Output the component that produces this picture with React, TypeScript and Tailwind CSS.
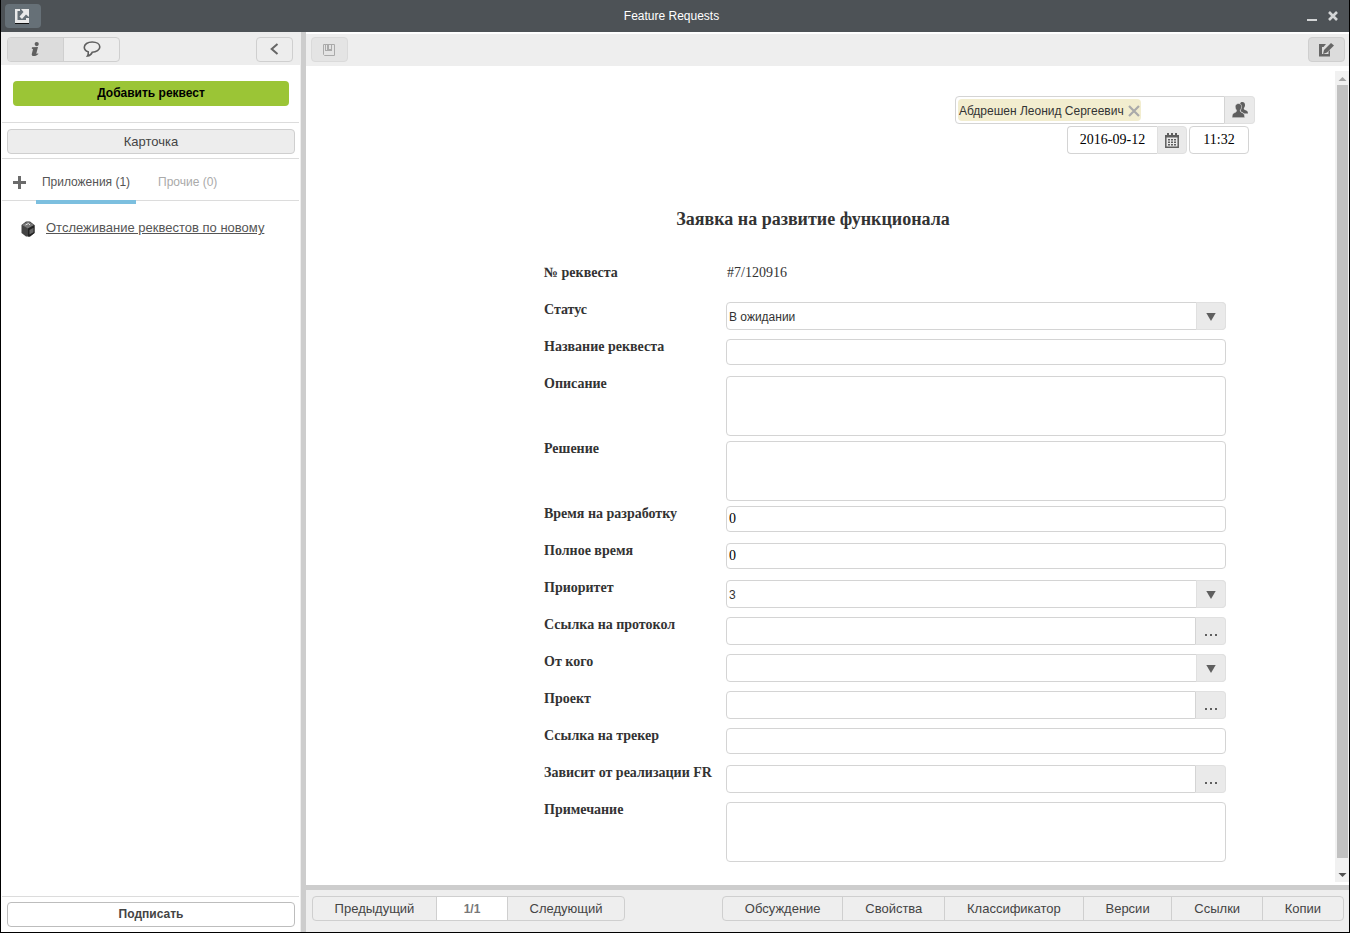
import type { ReactNode } from "react";

const inputClass =
  "rounded border border-[#d4d4d4] bg-white px-0.5 font-['Liberation_Serif',serif] text-[14px] text-black outline-none";
const addonClass =
  "flex w-[30px] shrink-0 items-center justify-center rounded-r border border-[#e0e0e0] bg-[#eaeaea] text-[#5f5f5f]";

type Field = {
  id: string;
  label: string;
  type: "text" | "area" | "select" | "link";
  value?: string;
};

const fields: Field[] = [
  { id: "status", label: "Статус", type: "select", value: "В ожидании" },
  { id: "name", label: "Название реквеста", type: "text" },
  { id: "description", label: "Описание", type: "area" },
  { id: "solution", label: "Решение", type: "area" },
  { id: "devtime", label: "Время на разработку", type: "text", value: "0" },
  { id: "fulltime", label: "Полное время", type: "text", value: "0" },
  { id: "priority", label: "Приоритет", type: "select", value: "3" },
  { id: "protocol", label: "Ссылка на протокол", type: "link" },
  { id: "from", label: "От кого", type: "select", value: "" },
  { id: "project", label: "Проект", type: "link" },
  { id: "tracker", label: "Ссылка на трекер", type: "text" },
  { id: "depends", label: "Зависит от реализации FR", type: "link" },
  { id: "note", label: "Примечание", type: "area" },
];

const footerLinks = ["Обсуждение", "Свойства", "Классификатор", "Версии", "Ссылки", "Копии"];

function FieldControl({ field }: { field: Field }) {
  if (field.type === "area") {
    return <textarea id={field.id} className={`${inputClass} block h-[60px] w-full resize-none`} />;
  }
  if (field.type === "select") {
    return (
      <div className="relative">
        <select
          id={field.id}
          defaultValue={field.value}
          className="block h-7 w-full appearance-none rounded border border-[#d4d4d4] bg-white pt-0.5 pr-8 pl-0.5 text-[12px] text-[#333] outline-none"
        >
          <option value={field.value}>{field.value}</option>
        </select>
        <span className={`${addonClass} pointer-events-none absolute inset-y-0 right-0 pt-0.5`}>
          <svg width="10" height="8" viewBox="0 0 10 8" fill="currentColor">
            <path d="M.3 0h9.400L5 8z" />
          </svg>
        </span>
      </div>
    );
  }
  if (field.type === "link") {
    return (
      <div className="flex h-7">
        <input id={field.id} type="text" className={`${inputClass} min-w-0 flex-1 rounded-r-none`} />
        <button type="button" aria-label={`Выбрать: ${field.label}`} className={`${addonClass} border-l-0`}>
          <svg width="12" height="10" viewBox="0 0 12 10" fill="currentColor">
            <path d="M0 8h2v2H0zM5 8h2v2H5zM10 8h2v2h-2z" />
          </svg>
        </button>
      </div>
    );
  }
  return (
    <input
      id={field.id}
      type="text"
      defaultValue={field.value}
      className={`${inputClass} block h-[26px] w-full`}
    />
  );
}

function Row({ label, htmlFor, children }: { label: string; htmlFor?: string; children: ReactNode }) {
  return (
    <div className="flex min-h-[37px] pb-[5px]">
      <label htmlFor={htmlFor} className="w-[182px] shrink-0 text-[14px] leading-4 font-bold">
        {label}
      </label>
      <div className="min-w-0 flex-1">{children}</div>
    </div>
  );
}

function Header() {
  return (
    <header className="flex h-8 items-center bg-[#4d5256] pr-[11px] pl-1">
      <div className="flex-1">
        <button
          type="button"
          aria-label="Открыть в новом окне"
          className="flex h-6 w-9 items-center justify-center rounded bg-[#667077] pr-0.5"
        >
          <svg width="14" height="15" viewBox="0 0 14 15">
            <path fill="#e9e9e9" d="M0 0h5v2H2.500v9H11V9h3v5H0zM6 0h8v8l-3-2.500L7 10 4.500 7.500 8.500 3z" />
            <path fill="#111" d="M0 14h14v1H0z" />
          </svg>
        </button>
      </div>
      <h1 className="text-[12px] text-white">Feature Requests</h1>
      <div className="flex flex-1 justify-end gap-[11px] text-[#d3d5d6]">
        <button type="button" aria-label="Свернуть">
          <svg width="10" height="10" viewBox="0 0 10 10" fill="currentColor">
            <path d="M0 8h10v2H0z" />
          </svg>
        </button>
        <button type="button" aria-label="Закрыть">
          <svg width="10" height="10" viewBox="0 0 10 10" stroke="currentColor" strokeWidth="2.600">
            <path d="M1 1l8 8M9 1L1 9" />
          </svg>
        </button>
      </div>
    </header>
  );
}

function Sidebar() {
  return (
    <aside className="flex w-[305px] shrink-0 flex-col border-r-[5px] border-[#cdcdcd] bg-white">
      <div className="flex h-[33px] items-center justify-between bg-[#ededed] pt-px pr-2 pl-1.5">
        <div className="flex h-[25px] overflow-hidden rounded border border-[#cfcfcf] text-[#5f5f5f]">
          <button
            type="button"
            aria-label="Информация"
            className="flex w-14 items-center justify-center border-r border-[#cfcfcf] bg-[#dcdcdc]"
          >
            <svg width="9" height="14" viewBox="0 0 9 14" fill="currentColor">
              <circle cx="5.700" cy="2.100" r="2.100" />
              <path d="M1 5.300L7 5 5.400 11.200c-.2.800.4.900 1.600 0l.4.700C5.600 13.600 4.200 14 2.800 14 .9 14 .4 12.900.9 11.400L2 7.200.7 6.500z" />
            </svg>
          </button>
          <button type="button" aria-label="Комментарии" className="flex w-[55px] items-center justify-center">
            <svg width="18" height="16" viewBox="0 0 18 16" fill="none" stroke="currentColor" strokeWidth="1.600">
              <path d="M5.200 10.800C2.800 10 1.300 8.400 1.300 6.200 1.300 3.200 4.600 1 9.200 1s7.600 2.200 7.600 5-3.400 5.300-7.600 5.300C8.200 13.500 6.700 14.700 4.500 15 5.200 13.800 5.400 12.500 5.200 10.800z" />
            </svg>
          </button>
        </div>
        <button
          type="button"
          aria-label="Скрыть панель"
          className="flex h-[25px] w-[37px] items-center justify-center rounded border border-[#cfcfcf] text-[#666]"
        >
          <svg width="9" height="12" viewBox="0 0 9 12" fill="none" stroke="currentColor" strokeWidth="2">
            <path d="M7.500 1L1.700 6l5.800 5" />
          </svg>
        </button>
      </div>

      <div className="flex flex-1 flex-col border-r border-[#ededed] px-px">
        <div className="border-b border-[#dcdcdc] px-[11px] py-4">
          <button
            type="button"
            className="block h-[25px] w-[276px] rounded bg-[#9bc536] pb-0.5 text-[12px] font-bold text-black"
          >
            Добавить реквест
          </button>
        </div>
        <div className="border-b border-[#dcdcdc] px-[5px] pt-1.5 pb-1">
          <button
            type="button"
            className="block h-[25px] w-[288px] rounded border border-[#cfcfcf] bg-[#ededed] text-[13px] text-[#444]"
          >
            Карточка
          </button>
        </div>
        <div className="flex h-[42px] items-center border-b border-[#dcdcdc] pl-2.5 text-[12px]">
          <button type="button" aria-label="Добавить приложение" className="mt-1 text-[#6b6b6b]">
            <svg width="14" height="14" viewBox="0 0 14 14" fill="currentColor">
              <path d="M6 1h3v5h5v3H9v5H6V9H1V6h5z" />
            </svg>
          </button>
          <button
            type="button"
            className="relative ml-2.5 h-full w-[100px] pt-1 text-[#555] after:absolute after:inset-x-0 after:-bottom-1 after:h-1 after:bg-[#7cbfdf]"
          >
            Приложения (1)
          </button>
          <button type="button" className="ml-4 h-full px-1.5 pt-1 text-[#aaa]">
            Прочие (0)
          </button>
        </div>
        <div className="flex flex-1 items-start gap-[11px] pt-[18px] pl-[19px]">
          <svg width="14" height="16" viewBox="0 0 14 16" className="mt-0.5">
            <path fill="#444" d="M5 .5h4L13.500 4v8L9 15.500H5L.5 12V4z" />
            <path fill="#777" d="M7 .5L13 4 7 7.500 1 4z" />
            <path fill="#222" d="M7 7.500v8h2l4.500-3.500V4z" />
            <path fill="#666" d="M8.500 9l4-2.300v4.500l-4 2.300z" />
            <path fill="none" stroke="#ddd" d="M4.500 4l3-1.500L9 4" />
          </svg>
          <a href="#" className="text-[13px] leading-[18px] text-[#555] underline">
            Отслеживание реквестов по новому
          </a>
        </div>
        <div className="border-t border-[#dcdcdc] px-[5px] py-[5px]">
          <button
            type="button"
            className="block h-[25px] w-[288px] rounded border border-[#bdbdbd] bg-white pb-0.5 text-[12px] font-bold text-[#444]"
          >
            Подписать
          </button>
        </div>
      </div>
    </aside>
  );
}

function Toolbar() {
  return (
    <div className="mt-0.5 flex h-8 items-center justify-between bg-[#eee] pr-1 pl-[5px]">
      <button
        type="button"
        aria-label="Сохранить"
        className="mb-px flex h-[25px] w-[37px] items-center justify-center rounded border border-[#dadada] bg-[#e4e4e4] pr-px text-[#aaa]"
      >
        <svg width="12" height="12" viewBox="0 0 12 12">
          <path fill="none" stroke="currentColor" d="M.5.500h11v11H1.500L.5 10.500z" />
          <path fill="currentColor" d="M2 0h7v7H2z" />
          <path fill="#e4e4e4" d="M3 1h1v5H3zM6 1h2v4H6z" />
        </svg>
      </button>
      <button
        type="button"
        aria-label="Редактировать"
        className="mb-px flex h-[25px] w-[37px] items-center justify-center rounded border border-[#cfcfcf] bg-[#dcdcdc] pr-px text-[#666]"
      >
        <svg width="15" height="14" viewBox="0 0 15 14" fill="currentColor">
          <path d="M0 1h7L4.500 4H3v7h6.500V8.500L11 7v6.500H0z" />
          <path d="M12 0l3 2.500-7 7L4 11l1-4z" />
        </svg>
      </button>
    </div>
  );
}

function People() {
  return (
    <div className="flex flex-col items-end gap-0.5">
      <div className="flex h-7 w-[300px]">
        <div className="flex min-w-0 flex-1 items-center rounded-l border border-[#d4d4d4] px-0.5">
          <span className="flex h-[22px] shrink-0 items-center gap-1 rounded bg-[#f2edcf] px-px pt-0.5 text-[12px] text-[#333]">
            Абдрешен Леонид Сергеевич
            <button type="button" aria-label="Удалить">
              <svg width="12" height="12" viewBox="0 0 12 12" stroke="#aaa" strokeWidth="2.200">
                <path d="M1 1l10 10M11 1L1 11" />
              </svg>
            </button>
          </span>
          <input type="text" aria-label="Сотрудник" className="min-w-0 flex-1 outline-none" />
        </div>
        <button type="button" aria-label="Выбрать сотрудника" className={`${addonClass} border-l-0`}>
          <svg width="16" height="16" viewBox="0 0 16 16" fill="currentColor">
            <path d="M8 2C8.200.6 9.200 0 10.300 0c1.700 0 2.700 1.300 2.700 3 0 1.400-.5 2.500-1.200 3.200 0 1.300.6 1.600 1.900 2.100 1.500.5 2.200 1.400 2.300 3.200h-3.700L9 9.500z" />
            <path
              stroke="#eaeaea"
              strokeWidth=".6"
              d="M6.500 1.500c2 0 3.100 1.300 3.100 3.300 0 1.500-.6 2.800-1.300 3.500 0 1.600.6 1.900 2 2.400 1.700.6 2.400 2 2.500 5H0c.1-3 .8-4.400 2.500-5 1.400-.5 2-.8 2-2.400-.7-.7-1.300-2-1.300-3.500 0-2 1.300-3.300 3.300-3.300z"
            />
          </svg>
        </button>
      </div>
      <div className="flex h-7 gap-0.5 pr-1.5">
        <div className="flex">
          <input
            type="text"
            aria-label="Дата"
            defaultValue="2016-09-12"
            className={`${inputClass} w-[90px] rounded-r-none border-r-0 pb-0.5 text-center`}
          />
          <button type="button" aria-label="Календарь" className={addonClass}>
            <svg width="14" height="15" viewBox="0 0 14 15">
              <path fill="none" stroke="currentColor" strokeWidth="1.500" d="M.8 2.800h12.400v11.400H.8z" />
              <path fill="currentColor" d="M0 2h14v2.500H0zM2 0h2v3H2zM6 0h2v3H6zM10 0h2v3h-2z" />
              <path
                fill="currentColor"
                d="M6 6h2v1.500H6zM9 6h2v1.500H9zM3 6h2v1.500H3zM3 8.500h2V10H3zM6 8.500h2V10H6zM9 8.500h2V10H9zM3 11h2v1.500H3zM6 11h2v1.500H6zM9 11h2v1.500H9z"
              />
            </svg>
          </button>
        </div>
        <input
          type="text"
          aria-label="Время"
          defaultValue="11:32"
          className={`${inputClass} w-[60px] pb-0.5 text-center`}
        />
      </div>
    </div>
  );
}

function Scrollbar() {
  return (
    <div aria-hidden="true" className="mt-[5px] mb-[3px] flex w-3.5 shrink-0 flex-col items-center bg-[#f1f1f1]">
      <svg width="14" height="14" viewBox="0 0 14 14" fill="#a3a3a3">
        <path d="M3.500 10h8L7.500 6z" />
      </svg>
      <div className="ml-px w-[11px] flex-1 bg-[#c1c1c1]" />
      <svg width="14" height="24" viewBox="0 0 14 24" fill="#505050">
        <path d="M3.500 15h8L7.500 19z" />
      </svg>
    </div>
  );
}

function Footer() {
  return (
    <footer className="flex items-start justify-between border-t-[5px] border-[#cdcdcd] bg-[#eee] pt-1.5 pr-[5px] pb-[11px] pl-1.5 text-[13px] text-[#444]">
      <div className="flex h-[25px] overflow-hidden rounded border border-[#cfcfcf]">
        <button type="button" className="w-[123px]">
          Предыдущий
        </button>
        <span className="flex w-[72px] items-center justify-center border-x border-[#cfcfcf] bg-white text-[12px] font-bold text-[#777]">
          1/1
        </span>
        <button type="button" className="w-[116px]">
          Следующий
        </button>
      </div>
      <div className="flex h-[25px] w-[622px] divide-x divide-[#cfcfcf] overflow-hidden rounded border border-[#cfcfcf]">
        {footerLinks.map((name) => (
          <button key={name} type="button" className="grow px-5">
            {name}
          </button>
        ))}
      </div>
    </footer>
  );
}

export default function App() {
  return (
    <div className="flex min-h-screen flex-col border-x border-b border-black bg-white font-['Liberation_Sans',Arial,sans-serif]">
      <Header />
      <div className="flex flex-1">
        <Sidebar />
        <main className="flex min-w-0 flex-1 flex-col">
          <Toolbar />
          <div className="flex flex-1">
            <div className="min-w-0 flex-1 pt-[30px] pr-[15px] pb-4">
              <form className="mx-auto max-w-[884px] text-[#333]">
                <People />
                <div className="font-['Liberation_Serif',serif]">
                  <h2 className="mt-[54px] mb-[35px] text-center text-[18px] leading-[22px] font-bold">
                    Заявка на развитие функционала
                  </h2>
                  <div className="pr-[29px] pl-[173px]">
                    <Row label="№ реквеста">
                      <p className="pl-px text-[14px] leading-4">#7/120916</p>
                    </Row>
                    {fields.map((field) => (
                      <Row key={field.id} label={field.label} htmlFor={field.id}>
                        <div className="font-['Liberation_Sans',Arial,sans-serif]">
                          <FieldControl field={field} />
                        </div>
                      </Row>
                    ))}
                  </div>
                </div>
              </form>
            </div>
            <Scrollbar />
          </div>
          <Footer />
        </main>
      </div>
    </div>
  );
}
